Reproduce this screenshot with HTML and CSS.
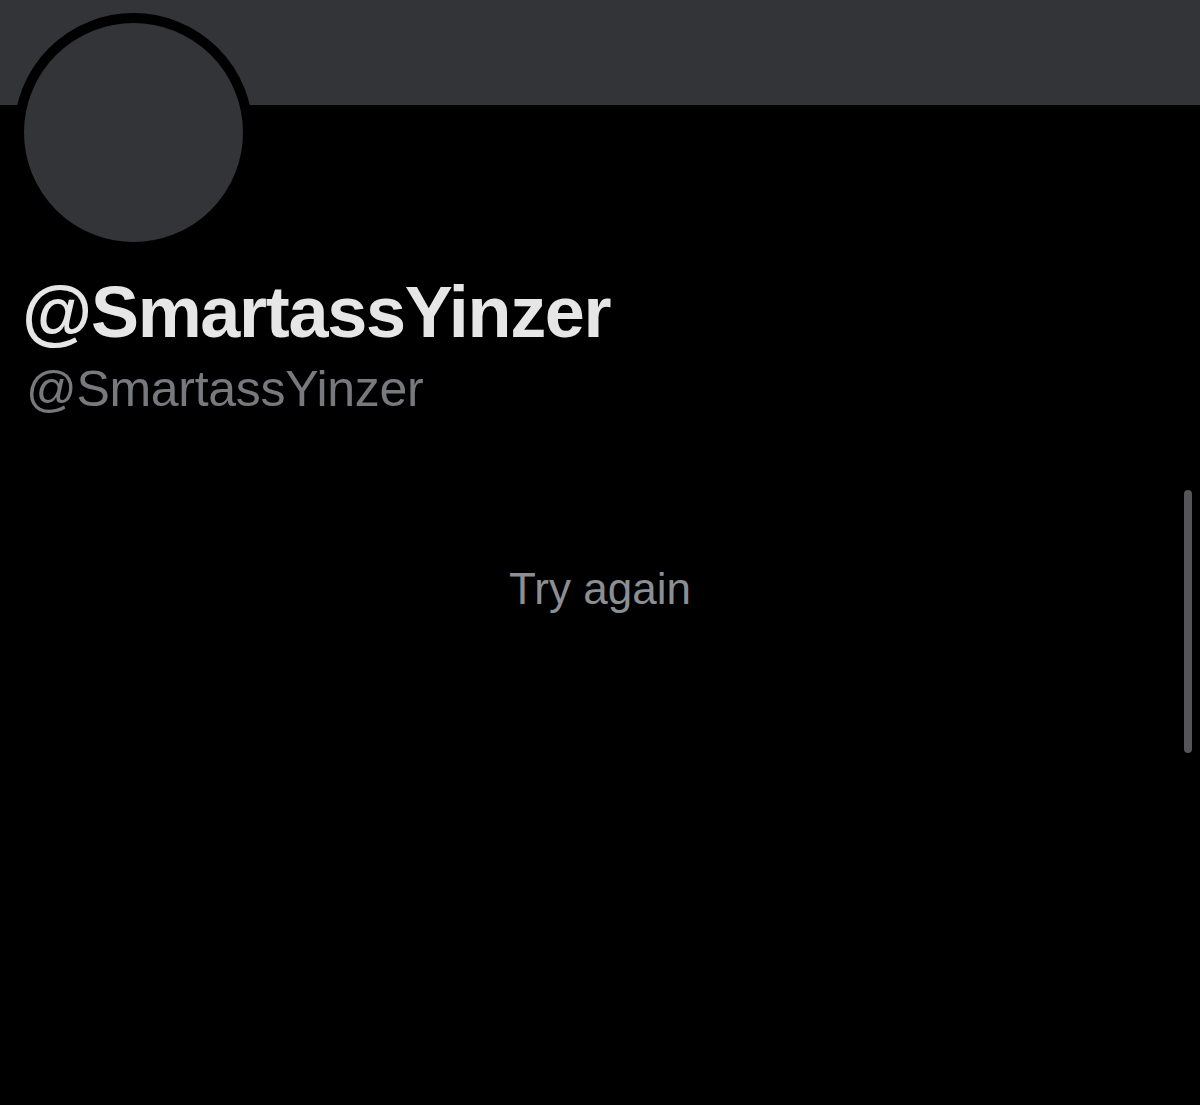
FILE: index.html
```html
<!DOCTYPE html>
<html lang="en">
<head>
<meta charset="utf-8">
<title>@SmartassYinzer</title>
<link rel="stylesheet" href="styles.css">
</head>
<body>
<div class="page">
  <div class="banner"></div>
  <div class="profile">
    <div class="avatar"></div>
    <div class="name">@SmartassYinzer</div>
    <div class="handle">@SmartassYinzer</div>
  </div>
  <div class="error">
    <span class="retry">Try again</span>
  </div>
  <div class="scrollbar"></div>
</div>
</body>
</html>
```

FILE: styles.css
```css
html, body {
  margin: 0;
  padding: 0;
  background: #000;
}
.page {
  position: relative;
  width: 1200px;
  height: 1105px;
  overflow: hidden;
  background: #000;
  font-family: "Liberation Sans", Arial, sans-serif;
}
.banner {
  height: 105px;
  background: #333438;
}
.profile {
  display: flex;
  flex-direction: column;
  align-items: flex-start;
  padding-left: 14px;
}
.avatar {
  width: 219px;
  height: 219px;
  margin-top: -92px;
  border: 10px solid #000;
  border-radius: 50%;
  background: #333438;
}
.name {
  margin-top: 24px;
  margin-left: 8px;
  font-size: 72px;
  line-height: 72px;
  font-weight: 700;
  letter-spacing: -1.3px;
  color: #e6e6e6;
}
.handle {
  margin-top: 16px;
  margin-left: 12px;
  font-size: 50px;
  line-height: 50px;
  letter-spacing: -0.3px;
  color: #77797d;
}
.error {
  display: flex;
  justify-content: center;
  margin-top: 153px;
}
.retry {
  font-size: 44px;
  line-height: 43px;
  color: #8b8e93;
}
.scrollbar {
  position: absolute;
  right: 8px;
  top: 490px;
  width: 8px;
  height: 263px;
  border-radius: 4px;
  background: #555557;
}
```
